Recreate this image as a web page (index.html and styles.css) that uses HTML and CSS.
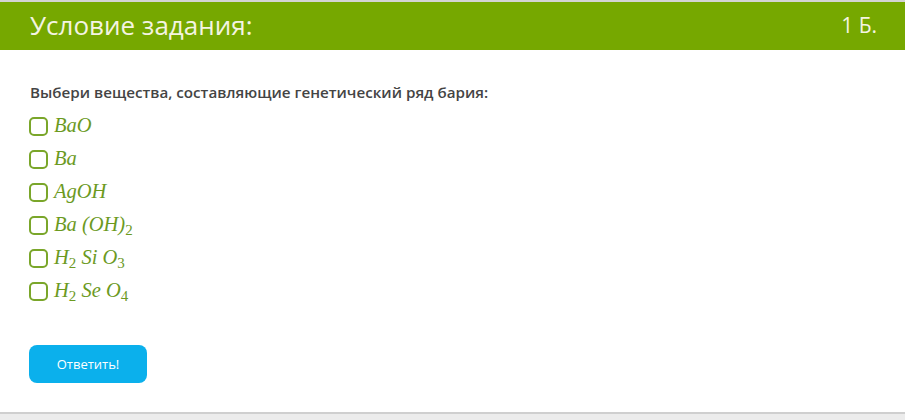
FILE: index.html
```html
<!DOCTYPE html>
<html lang="ru">
<head>
    <meta charset="UTF-8">
    <title>Условие задания</title>
    <link rel="stylesheet" href="styles.css">
</head>
<body>
    <div class="task">
        <div class="task-head">
            <h1>Условие задания:</h1>
            <span class="points">1 Б.</span>
        </div>
        <div class="task-body">
            <p class="question">Выбери вещества, составляющие генетический ряд бария:</p>
            <ul class="options">
                <li><span class="box"></span><span class="math">BaO</span></li>
                <li><span class="box"></span><span class="math">Ba</span></li>
                <li><span class="box"></span><span class="math">AgOH</span></li>
                <li><span class="box"></span><span class="math">Ba (OH)<sub>2</sub></span></li>
                <li><span class="box"></span><span class="math">H<sub>2</sub> Si O<sub>3</sub></span></li>
                <li><span class="box"></span><span class="math">H<sub>2</sub> Se O<sub>4</sub></span></li>
            </ul>
            <button class="answer">Ответить!</button>
        </div>
    </div>
    <div class="bottom"></div>
</body>
</html>
```

FILE: styles.css
```css
* {
    margin: 0;
    padding: 0;
    box-sizing: border-box;
}
body {
    font-family: 'Open Sans', sans-serif;
    background: #fff;
    width: 905px;
    height: 420px;
    overflow: hidden;
}
.task {
    border-top: 2px solid #d4d4d4;
    height: 412px;
}
.task-head {
    background-color: #76a800;
    height: 48px;
    display: flex;
    align-items: center;
    justify-content: space-between;
    padding: 0 28px 0 30px;
    color: #f4f4e2;
}
.task-head h1 {
    font-weight: 400;
    font-size: 26px;
    margin-top: -2px;
}
.points {
    font-size: 21px;
    margin-top: -2px;
}
.task-body {
    padding: 32px 29px 0;
}
.question {
    font-size: 15.2px;
    font-weight: 600;
    color: #444;
    margin-left: 1px;
}
.options {
    list-style: none;
    margin-top: 8px;
}
.options li {
    display: flex;
    align-items: center;
    height: 33px;
}
.box {
    width: 19px;
    height: 19px;
    border: 2px solid #7aa62a;
    border-radius: 5px;
    margin-right: 6px;
}
.math {
    font-family: 'Liberation Serif', serif;
    font-style: italic;
    font-size: 20.5px;
    color: #6c9a1f;
    margin-top: -2px;
}
.math sub {
    font-style: normal;
    font-size: 15px;
    vertical-align: -4px;
    line-height: 0;
}
.answer {
    margin-top: 37px;
    width: 118px;
    height: 38px;
    background-color: #0bb0ec;
    color: #fff;
    border: none;
    border-radius: 8px;
    font-family: 'Open Sans', sans-serif;
    font-size: 13px;
}
.bottom {
    border-top: 2px solid #cfcfcf;
    background: #ececec;
    height: 8px;
}
```
